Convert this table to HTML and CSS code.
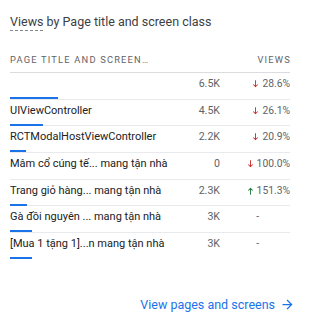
FILE: index.html
```html
<!DOCTYPE html>
<html lang="en">
<head>
  <meta charset="UTF-8" />
  <meta name="viewport" content="width=device-width, initial-scale=1.0"/>
  <title>Views by Page title and screen class</title>
  <link rel="stylesheet" href="styles.css">
</head>
<body>
  <div class="card">
    <div class="card-title"><span class="term">Views</span> by Page title and screen class</div>

    <div class="head">
      <div class="col-name">Page title and screen…</div>
      <div class="col-value">Views</div>
    </div>

    <div class="rows">
      <div class="row">
        <div class="col-name">
          <div class="name"></div>
          <div class="bar" style="width: 48px"></div>
        </div>
        <div class="col-value">6.5K</div>
        <div class="col-change down"><svg viewBox="0 0 8 12"><path d="M3.3 0h1.4v8.6l2.3-2.3 1 1L4 11.3 0 7.3l1-1 2.3 2.3z"/></svg>28.6%</div>
      </div>
      <div class="row">
        <div class="col-name">
          <div class="name">UIViewController</div>
          <div class="bar" style="width: 33px"></div>
        </div>
        <div class="col-value">4.5K</div>
        <div class="col-change down"><svg viewBox="0 0 8 12"><path d="M3.3 0h1.4v8.6l2.3-2.3 1 1L4 11.3 0 7.3l1-1 2.3 2.3z"/></svg>26.1%</div>
      </div>
      <div class="row">
        <div class="col-name">
          <div class="name">RCTModalHostViewController</div>
          <div class="bar" style="width: 16px"></div>
        </div>
        <div class="col-value">2.2K</div>
        <div class="col-change down"><svg viewBox="0 0 8 12"><path d="M3.3 0h1.4v8.6l2.3-2.3 1 1L4 11.3 0 7.3l1-1 2.3 2.3z"/></svg>20.9%</div>
      </div>
      <div class="row">
        <div class="col-name">
          <div class="name">Mâm cổ cúng tế... mang tận nhà</div>
        </div>
        <div class="col-value">0</div>
        <div class="col-change down"><svg viewBox="0 0 8 12"><path d="M3.3 0h1.4v8.6l2.3-2.3 1 1L4 11.3 0 7.3l1-1 2.3 2.3z"/></svg>100.0%</div>
      </div>
      <div class="row">
        <div class="col-name">
          <div class="name">Trang giỏ hàng... mang tận nhà</div>
          <div class="bar" style="width: 17px"></div>
        </div>
        <div class="col-value">2.3K</div>
        <div class="col-change up"><svg viewBox="0 0 8 12"><path d="M3.3 12h1.4V3.4l2.3 2.3 1-1L4 .7 0 4.7l1 1 2.3-2.3z"/></svg>151.3%</div>
      </div>
      <div class="row">
        <div class="col-name">
          <div class="name">Gà đồi nguyên ... mang tận nhà</div>
          <div class="bar" style="width: 22px"></div>
        </div>
        <div class="col-value">3K</div>
        <div class="col-change none">-</div>
      </div>
      <div class="row">
        <div class="col-name">
          <div class="name">[Mua 1 tặng 1]...n mang tận nhà</div>
          <div class="bar" style="width: 22px"></div>
        </div>
        <div class="col-value">3K</div>
        <div class="col-change none">-</div>
      </div>
    </div>

    <div class="footer">
      <a class="more" href="#">View pages and screens
        <svg viewBox="0 0 24 24"><path d="M12 4l-1.41 1.41L16.17 11H4v2h12.17l-5.58 5.59L12 20l8-8z"/></svg>
      </a>
    </div>
  </div>
</body>
</html>
```

FILE: styles.css
```css
body {
  margin: 0;
  background: white;
  font-family: Roboto, "Noto Sans", sans-serif;
}

.card {
  width: 280px;
  padding: 0 20px 0 10px;
}

.card-title {
  height: 36px;
  padding-top: 14px;
  box-sizing: border-box;
  font-size: 12.5px;
  line-height: 16px;
  color: #3c4043;
}

.term {
  display: inline-block;
  line-height: 14px;
  padding-bottom: 2px;
  background: repeating-linear-gradient(to right, #80868b 0 3px, transparent 3px 5px) left bottom / 100% 1px no-repeat;
}

.head {
  display: flex;
  padding: 17px 0 5px;
  line-height: 14px;
  font-size: 9.3px;
  letter-spacing: 1.2px;
  text-transform: uppercase;
  color: #5f6368;
  border-bottom: 1px solid #dadce0;
}

.head .col-name {
  flex: 1;
}

.head .col-value {
  margin-right: -1px;
}

.row {
  display: flex;
  height: 25.7px;
  border-bottom: 1px solid #e8eaed;
  font-size: 11px;
  line-height: 14px;
}

.row:last-child {
  border-bottom: none;
}

.row .col-name {
  flex: 1;
  min-width: 0;
  padding-top: 4px;
}

.name {
  height: 14px;
  color: #202124;
  white-space: nowrap;
}

.bar {
  height: 2px;
  margin-top: 6px;
  background: #1a73e8;
}

.col-value {
  width: 50px;
  text-align: right;
  color: #5f6368;
}

.row .col-value {
  padding-top: 4px;
  font-size: 10.6px;
}

.col-change {
  width: 70px;
  padding-top: 4px;
  text-align: right;
  font-size: 10.3px;
  color: #5f6368;
}

.col-change svg {
  width: 5px;
  height: 8px;
  margin-right: 4px;
  vertical-align: -1px;
}

.down svg {
  fill: #c5221f;
}

.up svg {
  fill: #137333;
}

.none {
  padding-right: 31px;
  width: 39px;
}

.footer {
  display: flex;
  justify-content: flex-end;
  margin-right: -5px;
  padding-top: 38px;
}

.more {
  display: flex;
  align-items: center;
  gap: 5px;
  font-size: 12.5px;
  line-height: 16px;
  color: #1a73e8;
  text-decoration: none;
}

.more svg {
  width: 15px;
  height: 15px;
  fill: #1a73e8;
}
```
